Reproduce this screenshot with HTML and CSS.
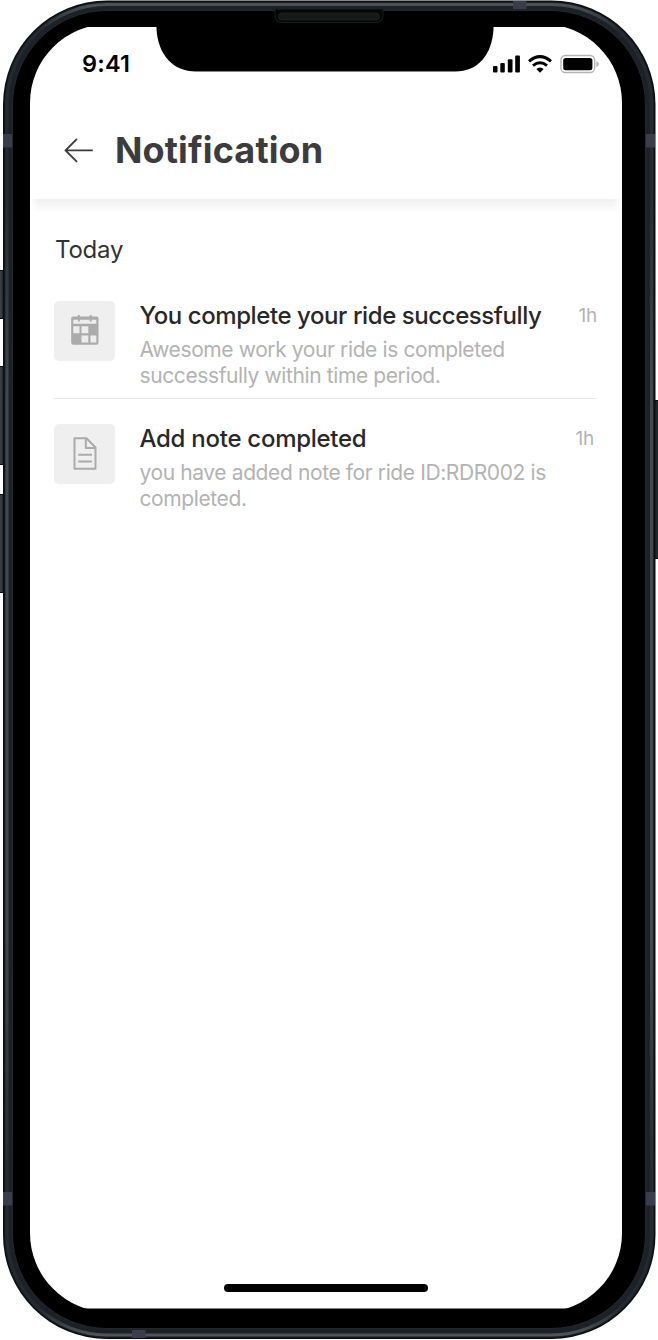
FILE: index.html
```html
<!DOCTYPE html>
<html lang="en">
<head>
<meta charset="utf-8">
<title>Notification</title>
<link rel="stylesheet" href="styles.css">
</head>
<body>
<div class="phone">
  <svg class="frame" width="658" height="1340" viewBox="0 0 658 1340" aria-hidden="true">
    <defs>
      <linearGradient id="button" x1="0" x2="1" y1="0" y2="0"><stop offset="0" stop-color="#30363b"/><stop offset=".6" stop-color="#3a4045"/><stop offset="1" stop-color="#14191d"/></linearGradient>
      <linearGradient id="sheen" x1="0" x2="0" y1="0" y2="1"><stop offset="0" stop-color="#4b5256"/><stop offset=".02" stop-color="#23292e"/><stop offset=".14" stop-color="#252b30"/><stop offset=".3" stop-color="#43494f"/><stop offset=".7" stop-color="#43494f"/><stop offset=".88" stop-color="#252b30"/><stop offset=".98" stop-color="#23292e"/><stop offset="1" stop-color="#505457"/></linearGradient>
      <clipPath id="screen"><rect x="29" y="27" width="594" height="1281.5"/></clipPath>
    </defs>
    <g fill="url(#button)" stroke="#090d10">
      <rect x="-4" y="270.500" width="8" height="48" rx="1"/>
      <rect x="-4" y="366.500" width="8" height="98" rx="1"/>
      <rect x="-4" y="494.500" width="8" height="98" rx="1"/>
    </g>
    <rect x="653" y="400.500" width="8" height="158" rx="1" fill="#20272b" stroke="#090d10"/>
    <rect x="3" y=".5" width="652.500" height="1338.500" rx="104" fill="#0b0f12"/>
    <rect x="4.500" y="2" width="649.500" height="1335.500" rx="102.500" fill="#1b2126"/>
    <rect x="7" y="4.500" width="644.500" height="1330.500" rx="100" fill="none" stroke="url(#sheen)" stroke-width="3"/>
    <rect x="12.500" y="10.500" width="633" height="1318" rx="94.500" fill="#000" stroke="#26292b"/>
    <g fill="#3b3d4a">
      <rect x="513" y="1" width="13.500" height="8"/>
      <rect x="132" y="1330" width="13.500" height="8"/>
      <rect x="3" y="134" width="9" height="13.500"/>
      <rect x="646" y="134" width="9" height="13.500"/>
      <rect x="3" y="1192" width="9" height="13.500"/>
      <rect x="646" y="1192" width="9" height="13.500"/>
    </g>
    <path d="M275 9.500v6q0 7 7 7h94q7 0 7-7v-6" fill="#050606" stroke="#1b1d1e"/>
    <rect x="278.500" y="13" width="101" height="7" rx="3.500" fill="#171818" stroke="#222425" stroke-width=".8"/>
    <g clip-path="url(#screen)"><rect x="30" y="24" width="592" height="1288" rx="79" fill="#fff"/></g>
    <path d="M156.500 26v3C158 55 173 71.500 196 71.500H455C478 71.500 492 55 493.500 29V26z" fill="#000"/>
    <path d="M196 71.500H455" stroke="#8c8686"/>
  </svg>

  <div class="screen">
    <div class="status">
      <span class="time">9:41</span>
      <svg class="indicators" width="108" height="22" viewBox="0 0 108 22" aria-hidden="true">
        <g fill="#000"><rect x="1" y="13" width="4.500" height="6.500" rx="1"/><rect x="8.300" y="10" width="4.500" height="9.500" rx="1"/><rect x="15.800" y="6.300" width="4.700" height="13.200" rx="1"/><rect x="23.200" y="2.500" width="4.700" height="17" rx="1"/></g>
        <g fill="none" stroke="#000" stroke-width="3"><path d="M37 8.300Q48 -1 59 8.300"/><path d="M41 12.600Q48 7 55 12.600"/></g>
        <path d="M44.300 16Q48 13 51.700 16L48 19.700z"/>
        <rect x="68.900" y="2.500" width="33.800" height="17" rx="4.500" fill="none" stroke="#b4b4b4" stroke-width="1.300"/>
        <rect x="71.200" y="5" width="29.200" height="12.300" rx="2.500"/>
        <path d="M104.300 8.200q2.600.9 2.600 2.900t-2.600 2.900z" fill="#b4b4b4"/>
      </svg>
    </div>
    <header class="header">
      <svg width="30" height="26" viewBox="0 0 30 26" fill="none" stroke="#3c3c3c" stroke-width="1.900" stroke-linecap="round" stroke-linejoin="round" aria-hidden="true"><path d="M28 13.400H1.500M12.500 2.400L1.500 13.400l11 11"/></svg>
      <h1 class="title">Notification</h1>
    </header>
    <main class="list">
      <h2 class="day">Today</h2>
      <article class="item first">
        <div class="tile">
          <svg width="28" height="32" viewBox="0 0 28 32" aria-hidden="true">
            <rect x=".2" y="1.500" width="27.300" height="28.300" rx="2" fill="#ababab"/>
            <path d="M2.300 4.700h23V8.800h-23zM2.300 11.200h6.200v7h-6.200zM10.500 11.200h6.800v7h-6.800zM10.500 20.500h6.800v7h-6.800zM19.500 20.500h5.800v7h-5.800z" fill="#ededed"/>
            <path d="M7.800 0v6.500M19.700 0v6.500" stroke="#ababab" stroke-width="2"/>
          </svg>
        </div>
        <div class="body">
          <div class="row"><h3 class="name">You complete your ride successfully</h3><span class="age">1h</span></div>
          <p class="text">Awesome work your ride is completed<br>successfully within time period.</p>
        </div>
      </article>
      <article class="item second">
        <div class="tile">
          <svg width="24" height="34" viewBox="0 0 24 34" fill="none" stroke="#ababab" stroke-width="2" stroke-linejoin="round" aria-hidden="true"><path d="M1.500 1.200h12L22.500 10.500v21.200h-21zM12.800 1.200V11H22.500M5.200 17.700h13.800M5.200 24.500h13.800"/></svg>
        </div>
        <div class="body">
          <div class="row"><h3 class="name">Add note completed</h3><span class="age">1h</span></div>
          <p class="text">you have added note for ride ID:RDR002 is<br>completed.</p>
        </div>
      </article>
    </main>
    <div class="home"></div>
  </div>
</div>
</body>
</html>
```
FILE: styles.css
```css
* { box-sizing: border-box; }
body { margin: 0; background: #fff; font-family: Inter, "Liberation Sans", sans-serif; }
h1, h2, h3, p { margin: 0; }
svg { display: block; flex: none; }
.phone { position: relative; width: 658px; height: 1340px; overflow: hidden; }
.frame { position: absolute; inset: 0; }
.screen { position: relative; display: flex; flex-direction: column; height: 1340px; padding: 27px 36px 0 30px; }
.status { display: flex; justify-content: space-between; height: 75px; padding: 26px 22px 0 52px; }
.time { font-size: 23.5px; line-height: 21px; font-weight: 600; letter-spacing: 0.2px; color: #000; }
.header { display: flex; align-items: center; gap: 21px; height: 97px; padding: 0 0 2px 34px; }
.header::after { content: ""; position: absolute; left: 30px; top: 199px; width: 592px; height: 14px; background: linear-gradient(90deg, #fff, transparent 10px, transparent 582px, #fff), linear-gradient(#efefef, #fff); }
.title { font-size: 36px; line-height: 44px; font-weight: 700; letter-spacing: 0.14px; color: #3c3c3c; }
.list { padding: 36px 24px 0 24px; }
.day { padding-left: 1px; font-size: 24px; line-height: 30px; font-weight: 400; letter-spacing: -0.2px; color: #333; }
.item { display: flex; gap: 24.5px; width: 543px; }
.first { height: 98px; margin-top: 36px; border-bottom: 1.5px solid #e8e8e8; }
.second { padding-top: 25px; }
.tile { display: flex; flex: none; align-items: center; justify-content: center; width: 61px; height: 60px; border-radius: 5px; background: #efefef; }
.body { flex: 1; white-space: nowrap; }
.row { display: flex; justify-content: space-between; height: 36px; }
.name { font-size: 24px; line-height: 30px; font-weight: 500; letter-spacing: -0.42px; color: #282828; }
.second .name { letter-spacing: -0.27px; }
.age { font-size: 19px; line-height: 30px; letter-spacing: -0.2px; color: #b3b3b3; }
.second .age { margin-right: 3px; }
.text { font-size: 21px; line-height: 26px; letter-spacing: -0.39px; color: #b3b3b3; }
.home { width: 204px; height: 8px; margin: auto 0 48px 194px; border-radius: 4px; background: #000; }
```
